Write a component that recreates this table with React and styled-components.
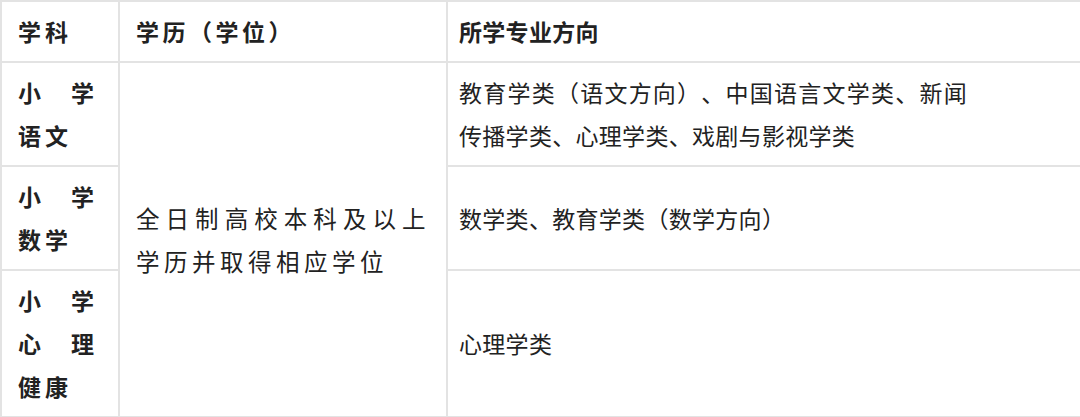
import React from "react";
import styled, { createGlobalStyle } from "styled-components";

const GlobalStyle = createGlobalStyle`
  html, body {
    margin: 0;
    padding: 0;
    background: #fff;
    overflow: hidden;
  }
  body {
    font-family: "Noto Sans CJK SC", "Noto Sans", sans-serif;
    color: #222;
  }
`;

// per-column spacing, taken from the reference
const columns = {
  subject: { pl: 16, pr: 20, ls: 4, fs: 23 },
  degree: { pl: 16, pr: 16, ls: 4.5, fs: 23.5 },
  major: { pl: 11, pr: 11, ls: 0.3, fs: 23 },
};

const Table = styled.table`
  width: 1100px;
  border-collapse: collapse;
  table-layout: fixed;
  border: 2px solid #e3e3e3;
`;

const Col = styled.col`
  width: ${(p) => (p.$w ? `${p.$w}px` : "auto")};
`;

const Cell = styled.td`
  border: 2px solid #e3e3e3;
  padding: 8px ${(p) => columns[p.$col].pr}px 8px ${(p) => columns[p.$col].pl}px;
  font-size: ${(p) => columns[p.$col].fs}px;
  line-height: 43px;
  letter-spacing: ${(p) => p.$ls ?? columns[p.$col].ls}px;
  font-weight: ${(p) => (p.$bold ? 700 : 400)};
  text-align: justify;
  vertical-align: middle;
  word-break: break-all;
  text-spacing-trim: space-all;
  font-feature-settings: "halt" 0, "chws" 0;
`;

const HeadCell = styled(Cell).attrs({ as: "th" })`
  font-weight: 700;
  font-size: 23px;
  text-align: left;
`;

const Para = styled.div`
  max-width: 508px;
  text-align: justify;
`;

const rows = [
  {
    subject: "小学语文",
    major: "教育学类（语文方向）、中国语言文学类、新闻传播学类、心理学类、戏剧与影视学类",
  },
  { subject: "小学数学", major: "数学类、教育学类（数学方向）" },
  { subject: "小学心理健康", major: "心理学类" },
];

export default function App() {
  return (
    <>
      <GlobalStyle />
      <Table>
        <colgroup>
          <Col $w={118} />
          <Col $w={328} />
          <Col />
        </colgroup>
        <thead>
          <tr>
            <HeadCell $col="subject">学科</HeadCell>
            <HeadCell $col="degree" $ls={3.5}>
              学历（学位）
            </HeadCell>
            <HeadCell $col="major">所学专业方向</HeadCell>
          </tr>
        </thead>
        <tbody>
          {rows.map((row, i) => (
            <tr key={row.subject}>
              <Cell $col="subject" $bold>
                {row.subject}
              </Cell>
              {i === 0 && (
                <Cell $col="degree" rowSpan={rows.length}>
                  全日制高校本科及以上学历并取得相应学位
                </Cell>
              )}
              <Cell $col="major">
                <Para>{row.major}</Para>
              </Cell>
            </tr>
          ))}
        </tbody>
      </Table>
    </>
  );
}
